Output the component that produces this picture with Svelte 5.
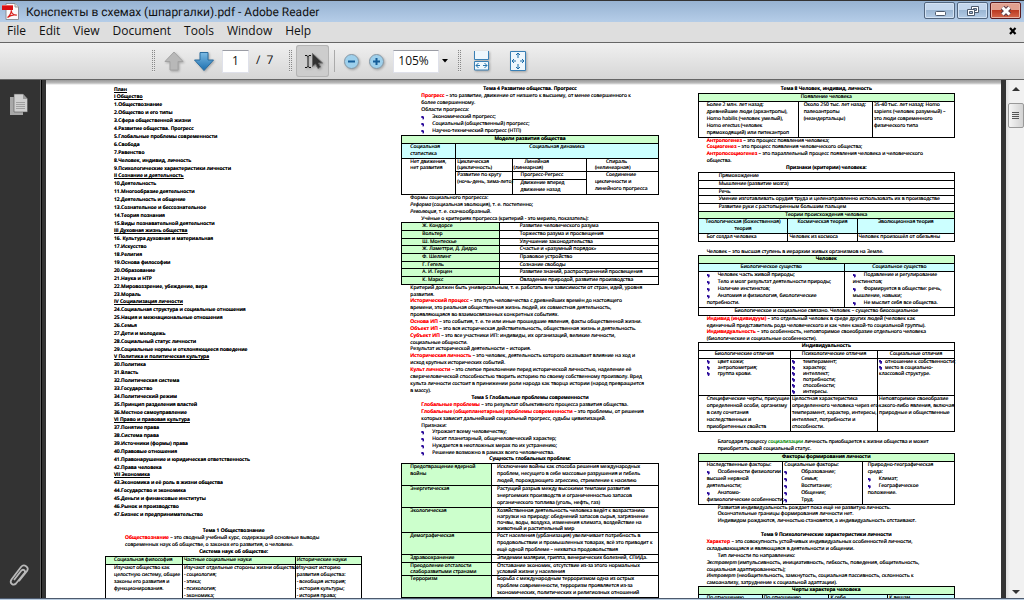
<script>
  const menus = ['File', 'Edit', 'View', 'Document', 'Tools', 'Window', 'Help'];

  const plan = [
    ['I Общество', ['1.Обществознание', '2.Общество и его типы', '3.Сфера общественной жизни', '4.Развитие общества. Прогресс', '5.Глобальные проблемы современности', '6.Свобода', '7.Равенство', '8.Человек, индивид, личность', '9.Психологические характеристики личности']],
    ['II Сознание и деятельность', ['10.Деятельность', '11.Многообразие деятельности', '12.Деятельность и общение', '13.Сознательное и бессознательное', '14.Теория познания', '15.Виды познавательной деятельности']],
    ['III Духовная жизнь общества', ['16. Культура духовная и материальная', '17.Искусство', '18.Религия', '19.Основа философии', '20.Образование', '21.Наука и НТР', '22.Мировоззрение, убеждение, вера', '23.Мораль']],
    ['IV Социализация личности', ['24.Социальная структура и социальные отношения', '25.Нация и межнациональные отношения', '26.Семья', '27.Дети и молодежь', '28.Социальный статус личности', '29.Социальные нормы и отклоняющееся поведение']],
    ['V Политика и политическая культура', ['30.Политика', '31.Власть', '32.Политическая система', '33.Государство', '34.Политический режим', '35.Принцип разделения властей', '36.Местное самоуправление']],
    ['VI Право и правовая культура', ['37.Понятие права', '38.Система права', '39.Источники (формы) права', '40.Правовые отношения', '41.Правонарушение и юридическая ответственность', '42.Права человека']],
    ['VII Экономика', ['43.Экономика и её роль в жизни общества', '44.Государство и экономика', '45.Деньги и финансовые институты', '46.Рынок и производство', '47.Бизнес и предпринимательство']]
  ];

  // Line prefixes: "- " bullet, "> " indent. Inline marks: *red*, _italic_, ^green^.
  const h = (text) => ({ kind: 'h', text });
  const p = (text, cls = '') => ({ kind: 'p', text, cls });
  const c = (text, cls = '', col = 1, row = 1) => ({ text, cls, col, row });
  const t = (cols, rows, cls = '') => ({ kind: 't', cols, rows, cls });
  const gap = { kind: 'gap' };

  const first = [
    h('Тема 1 Обществознание'),
    p('*Обществознание* – это сводный учебный курс, содержащий основные выводы\nсовременных наук об обществе, о законах его развития, о человеке.', 'in'),
    h('Система наук об обществе:'),
    t([30, 44, 26], [
      [c('Социальная философия', 'g'), c('Частные социальные науки', 'g n'), c('Исторические науки', 'g n')],
      [c('Изучают общество как\nцелостную систему, общие\nзаконы его развития и\nфункционирования.'), c('Изучают отдельные стороны жизни общества:\n- социология;\n- этика;\n- психология;\n- экономика;', 'n plain'), c('Изучают историю\nразвития общества:\n- всеобщая история;\n- история культуры;\n- история права;', 'n plain')]
    ])
  ];

  const second = [
    h('Тема 4 Развитие общества. Прогресс'),
    p('*Прогресс* – это развитие, движение от низшего к высшему, от менее совершенного к\nболее совершенному.\nОбласти прогресса:\n- Экономический прогресс;\n- Социальный (общественный) прогресс;\n- Научно-технический прогресс (НТП)', 'in'),
    t([21, 22, 29, 28], [
      [c('Модели развития общества', 'g mid b', 4)],
      [c('Социальная\nстатистика', 'a'), c('Социальная динамика', 'a mid', 3)],
      [c('Нет движения,\nнет развития', '', 1, 3), c('Циклическая\n(цикличность)', 'n'), c('> Линейная\n(линеарная)', 'n'), c('> Спираль\n(нелинеарная)')],
      [c('Развитие по кругу\n(ночь-день, зима-лето)', 'n', 1, 2), c('Прогресс-Регресс', 'w'), c('> Соединение\nцикличности и\nлинейного прогресса', '', 1, 2)],
      [c('Движение вперед\nдвижение назад', 'w')]
    ], 'list'),
    p('Формы социального прогресса:\n_Реформа_ (социальная эволюция), т. е. постепенно;\n_Революция_, т. е. скачкообразный.\n> Учёные о критериях прогресса (критерий - это мерило, показатель):', 'tight'),
    t([38, 62], [
      ['Ж. Кондорсе', 'Развитие человеческого разума'],
      ['Вольтер', 'Торжество разума и просвещения'],
      ['Ш. Монтескье', 'Улучшение законодательства'],
      ['Ж. Ламеттри, Д. Дидро', 'Счастье и «разумный порядок»'],
      ['Ф. Шеллинг', 'Правовое устройство'],
      ['Г. Гегель', 'Сознание свободы'],
      ['А. И. Герцен', 'Развитие знаний, распространений просвещения'],
      ['К. Маркс', 'Овладение природой, развитие производства']
    ].map(([a, b]) => [c(a, 'g i'), c(b, 'i')]), 'list'),
    p('Критерий должен быть универсальным, т. е. работать вне зависимости от стран, идей, уровня\nразвития.', 'tight'),
    p('*Исторический процесс* – это путь человечества с древнейших времён до настоящего\nвремени, это реальная общественная жизнь людей, их совместная деятельность,\nпроявляющаяся во взаимосвязанных конкретных событиях.\n*Основа ИП* – это события, т. е. те или иные прошедшие явления, факты общественной жизни.\n*Объект ИП* – это вся историческая действительность, общественная жизнь и деятельность.\n*Субъект ИП* – это все участники ИП: индивиды, их организаций, великие личности,\nсоциальные общности.', 'tight'),
    p('Результат исторической деятельности – история.\n*Историческая личность* – это человек, деятельность которого оказывает влияние на ход и\nисход крупных исторических событий.\n*Культ личности* – это слепое преклонение перед исторической личностью, наделение её\nсверхчеловеческой способностью творить историю по своему собственному произволу. Вред\nкульта личности состоит в принижении роли народа как творца истории (народ превращается\nв массу).'),
    h('Тема 5 Глобальные проблемы современности'),
    p('*Глобальные проблемы* – это результат объективного процесса развития общества.\n*Глобальные (общепланетарные) проблемы современности* – это проблемы, от решения\nкоторых зависит дальнейший социальный прогресс, судьбы цивилизаций.\nПризнаки:', 'in tight'),
    p('- Угрожает всему человечеству;\n- Носит планетарный, общечеловеческий характер;\n- Нуждается в неотложных мерах по их устранению;\n- Решение возможно в рамках всего человечества.', 'in tight'),
    h('Сущность глобальных проблем:'),
    t([35, 65], [
      ['Предотвращение ядерной\nвойны', 'Исключение войны как способа решения международных\nпроблем, несущего в себе массовые разрушения и гибель\nлюдей, порождающего агрессию, стремление к насилию'],
      ['Энергетическая', 'Растущий разрыв между высокими темпами развития\nэнергоемких производств и ограниченностью запасов\nорганического топлива (уголь, нефть, газ)'],
      ['Экологическая', 'Хозяйственная деятельность человека ведёт к возрастанию\nнагрузки на природу: обеднений запасов сырья, загрязнение\nпочвы, воды, воздуха, изменения климата, воздействие на\nживотный и растительный мир'],
      ['Демографическая', 'Рост населения (урбанизация) увеличивает потребность в\nпродовольствии и промышленных товарах, всё это приводит к\nещё одной проблеме – нехватка продовольствия'],
      ['Здравоохранение', 'Эпидемии малярии, гриппа, венерических болезней, СПИДа.'],
      ['Преодоление отсталости\nслаборазвитыми странами', 'Отставание экономик, отсутствие из-за этого нормальных\nусловий жизни у населения'],
      ['Терроризм', 'Борьба с международным терроризмом одна из острых\nпроблем современности, терроризм проявляется из-за\nэкономических, политических и религиозных отношений']
    ].map(([a, b]) => [c(a, 'g'), c(b, 'm')]), 'list')
  ];

  const third = [
    h('Тема 8 Человек, индивид, личность'),
    t([39, 29, 32], [
      [c('Появление человека', 'g mid', 3)],
      [c('Более 2 млн. лет назад:\nдревнейшие люди (архантропы),\nHomo habilis (человек умелый),\nHomo erectus (человек\nпрямоходящий) или питекантроп'), c('Около 250 тыс. лет назад:\nпалеоантропы\n(неандертальцы)', 'm'), c('35-40 тыс. лет назад: Homo\nsapiens (человек разумный) –\nэто люди современного\nфизического типа', 'n')]
    ]),
    p('*Антропогенез* – это процесс появления человека;', 'tight'),
    p('*Социогенез* – это процесс появления человеческого общества;\n*Антропосоциогенез* – это параллельный процесс появления человека и человеческого\nобщества.'),
    h('Признаки (критерии) человека:'),
    t([35, 27, 38], [
      ...['Прямохождение', 'Мышление (развитие мозга)', 'Речь', 'Умение изготавливать орудия труда и целенаправленно использовать их в производстве', 'Развитие руки с растопыренным большим пальцем'].map((s) => [c(s, 'i', 3)]),
      [c('Теории происхождения человека', 'g mid', 3)],
      [c('Теологическая (божественная)\nтеория', 'a mid'), c('Космическая теория', 'a mid'), c('Эволюционная теория', 'a mid')],
      [c('Бог создал человека'), c('Человек из космоса', 'n'), c('Человек произошёл от обезьяны', 'n')]
    ], 'list'),
    gap,
    p('Человек – это высшая ступень в иерархии живых организмов на Земле.', 'tight'),
    t([57, 43], [
      [c('Человек', 'g mid b', 2)],
      [c('Биологическое существо', 'a mid'), c('Социальное существо', 'a mid')],
      [c('- Человек часть живой природы;\n- Тело и мозг результат деятельности природы;\n- Наличие инстинктов;\n- Анатомия и физиология, биологические\nпотребности.'), c('- Подавление и регулирование\nинстинктов;\n- Формируется в обществе: речь,\nмышление, навыки;\n- Не мыслит себя все общества.')],
      [c('Биологическое и социальное связано. Человек – существо биосоциальное', 'mid', 2)]
    ]),
    p('*Индивид (индивидуум)* – это отдельный человек в среде других людей (человек как\nединичный представитель рода человеческого и как член какой-то социальной группы).', 'tight'),
    p('*Индивидуальность* – это особенность, неповторимое своеобразие отдельного человека\n(биологические и социальные особенности).', 'tight'),
    t([36, 34, 30], [
      [c('Индивидуальность', 'mid b', 3)],
      [c('Биологические отличия', 'mid'), c('Психологические отличия', 'mid'), c('Социальные отличия', 'mid')],
      [c('- цвет кожи;\n- антропометрия;\n- группа крови.'), c('- темперамент;\n- характер;\n- интеллект;\n- потребности;\n- способности;\n- интересы.', 'n'), c('- отношение к собственности;\n- место в социально-\nклассовой структуре.', 'n near')],
      [c('Специфические черты, присущие\nопределенной особи, организму\nв силу сочетания\nнаследственных и\nприобретенных свойств'), c('Целостная характеристика\nопределенного человека через его\nтемперамент, характер, интересы,\nинтеллект, потребности и\nспособности.', 'n'), c('Неповторимое своеобразие\nкакого-либо явления, включая\nприродные и общественные', 'n')]
    ], 'list'),
    gap,
    p('Благодаря процессу ^социализации^ личность приобщается к жизни общества и может\nприобретать свой социальный статус.', 'in'),
    t([33, 31, 36], [
      [c('Факторы формирования личности', 'g mid b', 3)],
      [c('Наследственные факторы:\n- Особенности физиологии\nвысшей нервной\nдеятельности;\n- Анатомо-\nфизиологические особенности;'), c('Социальные факторы:\n- Образование;\n- Семья;\n- Воспитание;\n- Общение;\n- Труд.', 'n far'), c('Природно-географическая\nсреда:\n- Климат;\n- Географическое\nположение.', 'm')]
    ]),
    p('Развитая индивидуальность рождает пока ещё не развитую личность.', 'in tight'),
    p('Окончательные границы формирования личности нет.\nИндивидом рождаются, личностью становятся, а индивидуальность отстаивают.', 'in'),
    gap,
    h('Тема 9 Психологические характеристики личности'),
    p('*Характер* – это совокупность устойчивых индивидуальных особенностей личности,\nскладывающаяся и являющаяся в деятельности и общении.\n> Тип личности по направлению:\n_Экстраверт_ (импульсивность, инициативность, гибкость, поведения, общительность,\nсоциальная адаптированность);', 'tight'),
    p('_Интроверт_ (необщительность, замкнутость, социальная пассивность, склонность к\nсамоанализу, затруднение к социальной адаптации).', 'tight'),
    t([25, 26, 23, 26], [
      [c('Черты характера человека', 'g mid b', 4)],
      [c('По отношению', 'a'), c('По отношению', 'a n'), c('К себе', 'a n'), c('К вещам', 'a n')]
    ])
  ];

  const parts = (s) => s.split(/(\*[^*]+\*|_[^_]+_|\^[^^]+\^)/).filter(Boolean);
  let page = $state('1');
  let zoom = $state('105%');
</script>

{#snippet lines(text)}
  {#each text.split('\n') as line}
    <span class="line" class:bullet={line.startsWith('- ')} class:indent={line.startsWith('> ')}>
      {#each parts(line.replace(/^> /, '').replace(/^- /, '')) as s}{#if s[0] === '*'}<strong>{s.slice(1, -1)}</strong>{:else if s[0] === '_'}<em>{s.slice(1, -1)}</em>{:else if s[0] === '^'}<mark>{s.slice(1, -1)}</mark>{:else}{s}{/if}{/each}
    </span>
  {/each}
{/snippet}

{#snippet blocks(list)}
  {#each list as b}
    {#if b.kind === 'h'}
      <h2>{b.text}</h2>
    {:else if b.kind === 'p'}
      <p class={b.cls}>{@render lines(b.text)}</p>
    {:else if b.kind === 'gap'}
      <div class="gap"></div>
    {:else}
      <table class={b.cls}>
        <colgroup>{#each b.cols as w}<col style="width: {w}%" />{/each}</colgroup>
        <tbody>
          {#each b.rows as row}
            <tr>{#each row as cell}<td class={cell.cls} colspan={cell.col} rowspan={cell.row}>{@render lines(cell.text)}</td>{/each}</tr>
          {/each}
        </tbody>
      </table>
    {/if}
  {/each}
{/snippet}

<div class="app">
  <header class="title">
    <svg class="logo" width="18" height="17" viewBox="0 0 18 17">
      <path d="M4 .5h9l3.500 3.500v12.500H4z" fill="#fafafa" stroke="#8b8f97" />
      <path d="M13 .5V4h3.500" fill="#ddd" stroke="#999" />
      <path d="M0 2h11v5H0z" fill="#d90f12" /><path d="M0 2h11v1H0z" fill="#f0605c" />
      <path d="M5.500 14.500c2-1 4-5 3.800-7.300 0 3 2.500 5 5.500 5-3-.8-6.500 0-9.300 2.300z" fill="none" stroke="#d8211d" stroke-width="1.200" />
    </svg>
    <h1>Конспекты в схемах (шпаргалки).pdf - Adobe Reader</h1>
    <div class="winbtns">
      <button aria-label="Minimize"><svg width="30" height="16"><rect x="10.500" y="8.500" width="10" height="4" rx="1" fill="#fff" stroke="#4d5a6d" /></svg></button>
      <button aria-label="Restore"><svg width="30" height="16"><g fill="#fff" stroke="#4d5a6d"><path d="M13.500 3.500h7v6h-7z" /><path d="M15.500 5.500h3v2h-3z" fill="#9db7d4" /><path d="M9.500 6.500h7v6h-7z" /><path d="M11.500 8.500h3v2h-3z" fill="#9db7d4" /></g></svg></button>
      <button class="close" aria-label="Close"><svg width="30" height="16"><path d="M11.500 4.500l7 7m0-7l-7 7" stroke="#5c3b45" stroke-width="5" /><path d="M11.500 4.500l7 7m0-7l-7 7" stroke="#fff" stroke-width="3" /></svg></button>
    </div>
  </header>

  <nav class="menu">
    {#each menus as m}<button>{m}</button>{/each}
    <button class="shut" aria-label="Close document"><svg width="8" height="8"><path d="M1 1l5.500 6m0-6L1 7" stroke="#000" stroke-width="2.200" /></svg></button>
  </nav>

  <div class="toolbar">
    <i class="grip"></i>
    <button aria-label="Previous page"><svg width="22" height="22"><path d="M11 2l9 9.500h-5V20H7v-8.500H2z" fill="#b8b8b8" stroke="#a2a2a2" /></svg></button>
    <button class="down" aria-label="Next page"><svg width="22" height="22">
      <defs><linearGradient id="blue" x2="0" y2="1"><stop stop-color="#7dbbe4" /><stop offset="1" stop-color="#1b6eae" /></linearGradient></defs>
      <path d="M7 2.500h8V10h5.500L11 20.500 1.500 10H7z" fill="url(#blue)" stroke="#2b6c9e" /></svg></button>
    <input class="page-no" aria-label="Page" bind:value={page} />
    <span class="total">/&ensp;7</span>
    <i class="grip"></i>
    <button class="tool" aria-label="Select tool"><svg width="33" height="32">
      <path d="M9 10.500h2l1 1 1-1h2M12 11v11M9 22.500h2l1-1 1 1h2" fill="none" stroke="#111" />
      <path d="M16.500 8.500v13l3-2.500 2.500 4.500 2.500-1.500-2-4h4z" fill="#333" stroke="#666" /></svg></button>
    <i class="sep"></i>
    <button class="round" aria-label="Zoom out"><svg width="17" height="17"><circle cx="8.500" cy="8.500" r="7" fill="#9ed0ec" stroke="#8597a5" /><path d="M5 8.500h7" stroke="#155d98" stroke-width="2" /></svg></button>
    <button class="round" aria-label="Zoom in"><svg width="17" height="17"><circle cx="8.500" cy="8.500" r="7" fill="#9ed0ec" stroke="#8597a5" /><path d="M5 8.500h7M8.500 5v7" stroke="#155d98" stroke-width="2" /></svg></button>
    <input class="zoom" aria-label="Zoom level" bind:value={zoom} />
    <button class="caret" aria-label="Zoom presets"><svg width="6" height="4"><path d="M0 0h6L3 3.500z" /></svg></button>
    <i class="grip"></i>
    <button class="fit" aria-label="Fit width"><svg width="18" height="22">
      <path d="M1.500 1v8.500h14V1" fill="#eef7fd" stroke="#3a80b5" /><path d="M1.500 20V11.500h14V20z" fill="#eef7fd" stroke="#3a80b5" />
      <path d="M3 15.500h4m3 0h4M5.500 13L3 15.500 5.500 18m6-5L14 15.500 11.500 18" fill="none" stroke="#2474ad" /></svg></button>
    <button class="fit" aria-label="Fit page"><svg width="18" height="22">
      <path d="M1.500 1.500h15v19h-15z" fill="#eef7fd" stroke="#3a80b5" />
      <path d="M9 3v5m0 6v5M3 11h4m4 0h4M7 5l2-2 2 2M7 17l2 2 2-2M5 9l-2 2 2 2m8-4l2 2-2 2" fill="none" stroke="#1b6ca8" /></svg></button>
  </div>

  <div class="body">
    <aside>
      <button aria-label="Pages"><svg width="20" height="24">
        <path d="M1 4h13v18H1z" fill="#a8a8a8" /><path d="M5 1h9l4.500 5v13H5z" fill="#d0d0d0" stroke="#555" stroke-width=".6" /><path d="M14 1v5h4.500z" fill="#999" />
        <path d="M7 9.500h9m-9 2h9m-9 2h9m-9 2h9" stroke="#a0a0a0" /></svg></button>
      <button aria-label="Attachments"><svg width="22" height="26">
        <path d="M6 17l7-9c2-2.500 5-.5 3.500 2L8 20.500c-2.500 2.500-7 0-4.500-4L13 4c3-3.500 8.500 0 6 4l-8 10" fill="none" stroke="#b9b9b9" stroke-width="1.800" /></svg></button>
    </aside>

    <main>
      <article>
        <section>
          <div class="plan">
            <h3>План</h3>
            {#each plan as [head, items]}
              <h3>{head}</h3>
              <ul>{#each items as item}<li>{item}</li>{/each}</ul>
            {/each}
          </div>
          {@render blocks(first)}
        </section>
        <section>{@render blocks(second)}</section>
        <section>{@render blocks(third)}</section>
      </article>
    </main>

    <div class="scroll">
      <button aria-label="Scroll up"><svg width="8" height="4"><path d="M0 4l4-4 4 4z" fill="#333" /></svg></button>
      <div class="thumb"><i></i><i></i><i></i><i></i></div>
      <button class="end" aria-label="Scroll down"><svg width="8" height="4"><path d="M0 0l4 4 4-4z" fill="#333" /></svg></button>
    </div>
  </div>
  <footer></footer>
</div>

<style>
  .app { height: 100vh; display: flex; flex-direction: column; overflow: hidden; font: 12px/16px "Open Sans", "Noto Sans", sans-serif; color: #111; background: #333; text-rendering: geometricPrecision; }
  button { border: 0; padding: 0; margin: 0; background: none; font: inherit; color: inherit; display: flex; align-items: center; justify-content: center; }
  svg { display: block; }
  .title { flex: none; height: 22px; box-sizing: border-box; border-top: 1px solid #333; display: flex; align-items: center; padding: 0 3px 0 2px; background: linear-gradient(#97b3d2, #b5cde8); }
  h1 { margin: 0 auto 0 6px; font: 400 12px/16px Roboto, "Open Sans", sans-serif; white-space: nowrap; }
  .winbtns { display: flex; gap: 2px; align-self: start; padding-top: 1px; }
  .winbtns button { width: 31px; height: 17px; box-sizing: border-box; border: 1px solid #52667f; border-radius: 2px; background: linear-gradient(#c3d6ec 45%, #9bb6d3 50%, #b4cce6); box-shadow: inset 0 0 0 1px #d3e2f3; }
  .winbtns .close { border-color: #5a1a1e; background: linear-gradient(#e2a08f 45%, #bc3a22 50%, #d5674c); box-shadow: inset 0 0 0 1px #e8b3a6; }
  .menu { flex: none; height: 20px; display: flex; gap: 13px; align-items: center; padding: 0 7px 2px 7px; background: #dedede; box-sizing: border-box; }
  .shut { margin-left: auto; }
  .toolbar { flex: none; height: 38px; box-sizing: border-box; border-top: 1px solid #666; border-bottom: 1px solid #666; padding-left: 152px; display: flex; align-items: center; background: linear-gradient(#f0f0f0, #d6d6d6); }
  .toolbar svg { filter: drop-shadow(1px 1px 1px #0004); }
  .grip { width: 3px; height: 22px; background: repeating-linear-gradient(#0000 0 1px, #e4e4e4 1px 2px), linear-gradient(90deg, #888 1px, #0000 1px 2px, #888 2px); }
  .toolbar button { margin-left: 8px; }
  .toolbar input { box-sizing: border-box; height: 23px; border: 1px solid #dfe1ea; border-top-color: #9a9ca4; background: #fff; font: inherit; color: #111; padding: 0 4px 2px; margin-left: 8px; }
  .toolbar .page-no { width: 27px; text-align: center; margin-left: 7px; }
  .total { margin: 0 16px 0 7px; padding-bottom: 2px; }
  .toolbar .tool { margin: 0 5px 0 4px; width: 33px; height: 32px; border-radius: 3px; background: #cdcdcd; box-shadow: inset 0 0 0 1px #b4b4b4; }
  .sep { width: 1px; height: 22px; background: #aaa; }
  .toolbar .zoom { width: 46px; }
  .toolbar .caret { width: 12px; height: 22px; margin: 0 7px 0 0; }
  .toolbar .caret svg { filter: none; }
  .toolbar .fit { margin: 0 6px 0 12px; }
  .body { flex: 1; min-height: 0; display: flex; }
  aside { flex: none; width: 46px; box-sizing: border-box; display: flex; flex-direction: column; justify-content: space-between; padding: 13px 10px 9px 8px; background: linear-gradient(90deg, #333 40px, #666 40px 41px, #000 41px 42px, #333 42px); }
  aside button { width: 22px; }
  main { flex: 1; min-width: 0; overflow: hidden; border-right: 5px solid #333; background: linear-gradient(#999, #bbb 3px, #fff 5px); }
  article { display: grid; grid-template-columns: repeat(3, minmax(0, 1fr)); column-gap: 39px; padding: 6px 46px 0 59px; font: 400 5px/7px "Open Sans", "Noto Sans", sans-serif; color: #000; white-space: nowrap; text-shadow: 0 0 currentColor; }
  h2, h3, p, ul { margin: 0; padding: 0; font-size: 5px; }
  h2 { line-height: 7px; font-weight: 600; text-align: center; }
  h3 { line-height: 7px; font-weight: 600; text-decoration: underline; }
  .plan { padding: 1px 0 9px 9px; font-weight: 600; }
  ul { list-style: none; line-height: 8px; }
  p { padding-left: 9px; }
  .in { padding-left: 20px; }
  .tight { margin-bottom: -1px; }
  .gap { height: 7px; }
  .line { display: block; }
  .indent { padding-left: 11px; }
  .bullet { display: flex; align-items: center; white-space: pre; }
  .bullet::before { content: ""; flex: none; width: 3px; height: 4px; margin-right: 8px; background: #2a0a9a; clip-path: polygon(0 0, 60% 0, 60% 25%, 100% 25%, 100% 75%, 70% 100%, 40% 100%, 40% 60%, 0 60%); }
  .near .bullet::before { margin-right: 3px; }
  .far .bullet::before { margin-right: 14px; }
  .plain .bullet::before { content: "-"; width: auto; height: auto; margin-right: 1px; background: none; clip-path: none; }
  strong { color: #f00; font-weight: 600; }
  mark { color: #080; background: none; }
  table { width: 100%; table-layout: fixed; border-collapse: collapse; }
  td { border: 1px solid #000; padding: 0 0 0 8px; vertical-align: top; text-align: left; }
  .list tr:nth-child(3n) td { line-height: 6px; }
  .n { padding-left: 1px; }
  .m { padding-left: 5px; }
  .i { padding-left: 20px; }
  .w { padding-left: 8px; }
  .g { background: #cfc; }
  .a { background: #cff; }
  .b { font-weight: 600; }
  .mid { text-align: center; padding-left: 0; }
  .scroll { flex: none; width: 18px; box-sizing: border-box; display: flex; flex-direction: column; align-items: center; background: linear-gradient(90deg, #ddd, #f1f1f1 4px); padding-left: 1px; }
  .scroll button { width: 16px; height: 18px; }
  .thumb { width: 16px; height: 25px; margin-top: 5px; box-sizing: border-box; border: 1px solid #999; border-radius: 2px; background: linear-gradient(90deg, #f5f5f5, #d2d2d2); display: flex; flex-direction: column; align-items: center; justify-content: center; gap: 1px; }
  .thumb i { width: 7px; height: 1px; background: #555; }
  .scroll .end { margin-top: auto; height: 12px; }
  footer { flex: none; height: 2px; background: #b9cce0; border-top: 1px solid #4d5a6d; box-sizing: border-box; }
</style>
